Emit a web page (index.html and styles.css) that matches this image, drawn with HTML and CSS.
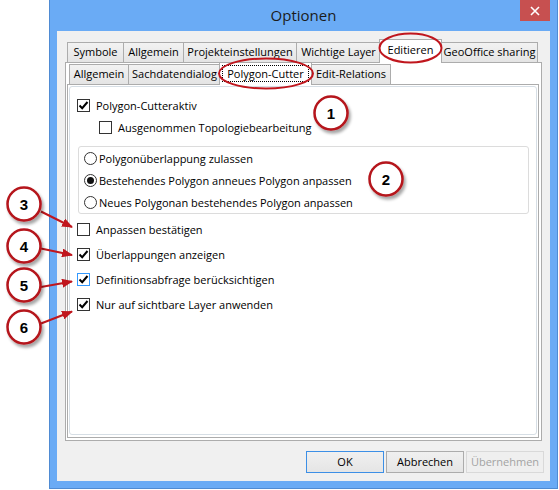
FILE: index.html
```html
<!DOCTYPE html>
<html lang="de">
<head>
<meta charset="utf-8">
<title>Optionen</title>
<link rel="stylesheet" href="styles.css">
</head>
<body>
<div class="window">
  <div class="titlebar">
    <span class="tb-spacer"></span>
    <div class="title">Optionen</div>
    <div class="close">
      <svg width="10" height="10" viewBox="0 0 10 10"><path d="M1 1 L9 9 M9 1 L1 9" stroke="#fff" stroke-width="1.6"/></svg>
    </div>
  </div>
  <div class="client">
    <div class="tabctl outer">
      <div class="strip">
        <div class="tab o1">Symbole</div>
        <div class="tab o2">Allgemein</div>
        <div class="tab o3">Projekteinstellungen</div>
        <div class="tab o4">Wichtige Layer</div>
        <div class="tab sel o5">Editieren</div>
        <div class="tab o6">GeoOffice sharing</div>
      </div>
      <div class="panel">
        <div class="tabctl inner">
          <div class="strip">
            <div class="tab i1">Allgemein</div>
            <div class="tab i2">Sachdatendialog</div>
            <div class="tab sel i3"><span class="focus">Polygon-Cutter</span></div>
            <div class="tab i4">Edit-Relations</div>
          </div>
          <div class="panel">
            <div class="page">
              <div class="row r1">
                <span class="box"><svg width="11" height="11" viewBox="0 0 11 11"><path d="M1.5 5.5 L4.2 8.2 L9.5 2" fill="none" stroke="#000" stroke-width="2"/></svg></span>
                <span>Polygon-Cutteraktiv</span>
              </div>
              <div class="row r2">
                <span class="box"></span>
                <span>Ausgenommen Topologiebearbeitung</span>
              </div>
              <div class="group">
                <div class="radio-row"><span class="radio"></span><span>Polygonüberlappung zulassen</span></div>
                <div class="radio-row"><span class="radio on"></span><span>Bestehendes Polygon anneues Polygon anpassen</span></div>
                <div class="radio-row"><span class="radio"></span><span>Neues Polygonan bestehendes Polygon anpassen</span></div>
              </div>
              <div class="checks">
                <div class="row cr">
                  <span class="box"></span>
                  <span>Anpassen bestätigen</span>
                </div>
                <div class="row cr">
                  <span class="box"><svg width="11" height="11" viewBox="0 0 11 11"><path d="M1.5 5.5 L4.2 8.2 L9.5 2" fill="none" stroke="#000" stroke-width="2"/></svg></span>
                  <span>Überlappungen anzeigen</span>
                </div>
                <div class="row cr">
                  <span class="box hot"><svg width="11" height="11" viewBox="0 0 11 11"><path d="M1.5 5.5 L4.2 8.2 L9.5 2" fill="none" stroke="#000" stroke-width="2"/></svg></span>
                  <span>Definitionsabfrage berücksichtigen</span>
                </div>
                <div class="row cr">
                  <span class="box"><svg width="11" height="11" viewBox="0 0 11 11"><path d="M1.5 5.5 L4.2 8.2 L9.5 2" fill="none" stroke="#000" stroke-width="2"/></svg></span>
                  <span>Nur auf sichtbare Layer anwenden</span>
                </div>
              </div>
            </div>
          </div>
        </div>
      </div>
    </div>
    <div class="buttons">
      <div class="btn default">OK</div>
      <div class="btn">Abbrechen</div>
      <div class="btn disabled">Übernehmen</div>
    </div>
  </div>
</div>

<svg class="annot" width="559" height="490" viewBox="0 0 559 490">
  <defs>
    <filter id="sh" x="-40%" y="-40%" width="180%" height="180%">
      <feDropShadow dx="2" dy="3" stdDeviation="1.6" flood-color="#000" flood-opacity="0.35"/>
    </filter>
    <marker id="ah" markerUnits="userSpaceOnUse" markerWidth="11" markerHeight="9" refX="10" refY="4.5" orient="auto">
      <path d="M0 0 L11 4.5 L0 9 Z" fill="#c0161d"/>
    </marker>
  </defs>
  <ellipse cx="410.5" cy="48" rx="31" ry="14.5" fill="none" stroke="#c0161d" stroke-width="2"/>
  <ellipse cx="266" cy="73.5" rx="47" ry="15" fill="none" stroke="#c0161d" stroke-width="2"/>

  <g stroke="#c0161d" stroke-width="2" fill="none">
    <line x1="41" y1="211.5" x2="72" y2="227" marker-end="url(#ah)"/>
    <line x1="41" y1="248.5" x2="72" y2="255" marker-end="url(#ah)"/>
    <line x1="41" y1="287" x2="72" y2="281.5" marker-end="url(#ah)"/>
    <line x1="41" y1="323.5" x2="72" y2="311.5" marker-end="url(#ah)"/>
  </g>

  <g class="marks">
    <circle cx="331" cy="113" r="16.5" filter="url(#sh)"/>
    <circle cx="386" cy="179" r="16.5" filter="url(#sh)"/>
    <circle cx="24" cy="204" r="16.5" filter="url(#sh)"/>
    <circle cx="24" cy="246" r="16.5" filter="url(#sh)"/>
    <circle cx="24" cy="285" r="16.5" filter="url(#sh)"/>
    <circle cx="24" cy="327" r="16.5" filter="url(#sh)"/>
  </g>
  <g class="nums">
    <text x="331" y="113">1</text>
    <text x="386" y="179">2</text>
    <text x="24" y="204">3</text>
    <text x="24" y="246">4</text>
    <text x="24" y="285">5</text>
    <text x="24" y="327">6</text>
  </g>
</svg>
</body>
</html>
```

FILE: styles.css
```css
* { box-sizing: border-box; }

html, body {
  margin: 0;
  padding: 0;
  background: #ffffff;
}

body {
  position: relative;
  width: 559px;
  height: 490px;
  overflow: hidden;
  font-family: "Open Sans", "Noto Sans", sans-serif;
  font-size: 11px;
  color: #000;
}

.window {
  margin-left: 49px;
  width: 509px;
  height: 489px;
  background: #6aabf5;
  border: 1px solid #4f8bd3;
  border-top: none;
  display: flex;
  flex-direction: column;
}

.titlebar {
  height: 31px;
  display: grid;
  grid-template-columns: 1fr auto 1fr;
  flex: none;
}

.title {
  font-size: 15px;
  line-height: 20px;
  padding-top: 5px;
  color: #1b1b1b;
}

.close {
  justify-self: end;
  align-self: start;
  width: 30px;
  height: 21px;
  margin-right: 7px;
  background: #c75050;
  display: flex;
  align-items: center;
  justify-content: center;
}

.client {
  flex: 1;
  margin: 0 7px 7px 7px;
  background: #f0f0f0;
  padding: 8px 8px 8px 8px;
  display: flex;
  flex-direction: column;
}

/* Tab controls */
.tabctl {
  display: flex;
  flex-direction: column;
}

.tabctl.outer { flex: 1; }

.strip {
  display: flex;
  align-items: flex-end;
  padding-left: 2px;
  flex: none;
}

.outer > .strip { height: 23px; }
.inner > .strip { height: 21px; }

.tab {
  height: 20px;
  border: 1px solid #acacac;
  border-bottom: none;
  background: linear-gradient(#f2f2f2, #e4e4e4);
  margin-left: -1px;
  text-align: center;
  line-height: 18px;
  white-space: nowrap;
  overflow: hidden;
}

.tab:first-child { margin-left: 0; }

.tab.sel {
  background: #ffffff;
  position: relative;
  z-index: 2;
  margin-left: -2px;
  margin-bottom: -1px;
}

.outer > .strip > .tab.sel { height: 24px; line-height: 20px; }
.inner > .strip > .tab.sel { height: 23px; line-height: 20px; padding: 2px 2px 0 2px; }

.o1 { width: 57px; }
.o2 { width: 61px; }
.o3 { width: 114px; }
.o4 { width: 85px; }
.o5 { width: 63px; }
.o6 { width: 97px; }

.i1 { width: 60px; }
.i2 { width: 93px; }
.i3 { width: 93px; }
.i4 { width: 80px; }

.focus {
  display: block;
  height: 17px;
  line-height: 15px;
  border: 1px dotted #000;
}

.panel {
  flex: 1;
  border: 1px solid #acacac;
  background: #ffffff;
  display: flex;
  flex-direction: column;
}

.outer > .panel { padding: 0 2px 2px 1px; }
.inner { flex: 1; }
.inner > .panel { padding: 1px 1px 2px 1px; }

.page {
  flex: 1;
  border: 1px solid #d6dee5;
  border-radius: 3px;
  padding: 0 7px 0 7px;
  background: #fff;
}

/* rows */
.row {
  display: flex;
  align-items: center;
  height: 16px;
  white-space: nowrap;
}

.r1 { margin-top: 10px; }
.r2 { margin-top: 6px; padding-left: 22px; }

.box {
  width: 13px;
  height: 13px;
  border: 1px solid #333;
  background: #fff;
  margin-right: 6px;
  display: flex;
  align-items: center;
  justify-content: center;
  flex: none;
}

.box.hot { border-color: #3399ff; }

.group {
  margin: 11px 0 0 1px;
  border: 1px solid #dcdcdc;
  border-radius: 3px;
  padding-left: 5px;
}

.radio-row {
  display: flex;
  align-items: center;
  height: 22px;
  white-space: nowrap;
}

.radio {
  width: 13px;
  height: 13px;
  border: 1px solid #333;
  border-radius: 50%;
  background: #fff;
  margin-right: 2px;
  display: flex;
  align-items: center;
  justify-content: center;
  flex: none;
}

.radio.on::after {
  content: "";
  width: 7px;
  height: 7px;
  border-radius: 50%;
  background: #111;
}

.checks { margin-top: 3px; }

.row.cr { height: 25px; }

/* buttons */
.buttons {
  flex: none;
  margin-top: 10px;
  margin-right: -2px;
  height: 22px;
  display: flex;
  justify-content: flex-end;
  gap: 2px;
}

.btn {
  width: 78px;
  height: 22px;
  border: 1px solid #acacac;
  background: linear-gradient(#f0f0f0, #e5e5e5);
  text-align: center;
  line-height: 20px;
}

.btn.default { border-color: #3c8fe6; }

.btn.disabled {
  border-color: #d9d9d9;
  background: #efefef;
  color: #a3a3a3;
}

/* annotations */
.annot {
  position: absolute;
  left: 0;
  top: 0;
  z-index: 10;
  pointer-events: none;
}

.marks circle {
  fill: #ffffff;
  stroke: #b5141b;
  stroke-width: 2.5;
}

.nums text {
  font-family: "Liberation Sans", Arial, sans-serif;
  font-weight: bold;
  font-size: 15px;
  fill: #000;
  text-anchor: middle;
  dominant-baseline: central;
}
```
